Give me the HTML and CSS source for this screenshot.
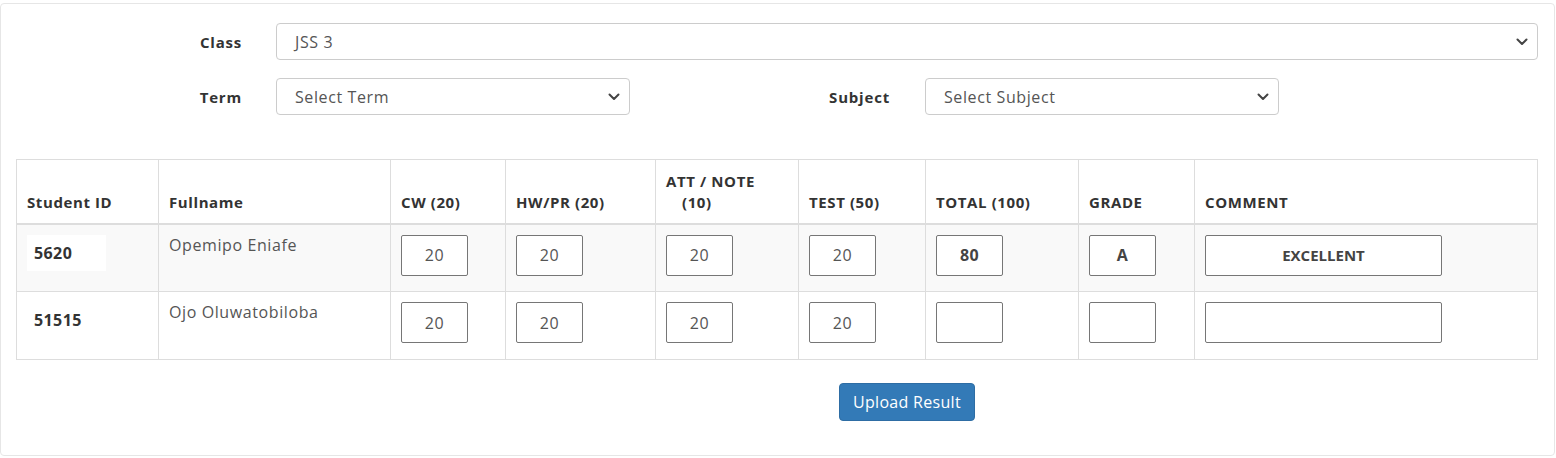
FILE: index.html
```html
<!DOCTYPE html>
<html lang="en">
<head>
<meta charset="utf-8">
<title>Upload Result</title>
<link rel="stylesheet" href="styles.css">
</head>
<body>
<div class="card">
  <div class="form-row">
    <label class="lbl lbl-class">Class</label>
    <div class="select sel-class"><span>JSS 3</span><svg class="chev" viewBox="0 0 12 8" width="12" height="8"><polyline points="1.5,1.5 6,6 10.5,1.5" /></svg></div>
  </div>
  <div class="form-row row-two">
    <label class="lbl lbl-term">Term</label>
    <div class="select sel-half"><span>Select Term</span><svg class="chev" viewBox="0 0 12 8" width="12" height="8"><polyline points="1.5,1.5 6,6 10.5,1.5" /></svg></div>
    <label class="lbl lbl-subject">Subject</label>
    <div class="select sel-half"><span>Select Subject</span><svg class="chev" viewBox="0 0 12 8" width="12" height="8"><polyline points="1.5,1.5 6,6 10.5,1.5" /></svg></div>
  </div>

  <table class="results">
    <colgroup>
      <col class="c-id"><col class="c-name"><col class="c-cw"><col class="c-hw"><col class="c-att"><col class="c-test"><col class="c-total"><col class="c-grade"><col class="c-comment">
    </colgroup>
    <thead>
      <tr>
        <th>Student ID</th>
        <th>Fullname</th>
        <th>CW (20)</th>
        <th>HW/PR (20)</th>
        <th>ATT / NOTE<br><span class="indent">(10)</span></th>
        <th>TEST (50)</th>
        <th>TOTAL (100)</th>
        <th>GRADE</th>
        <th>COMMENT</th>
      </tr>
    </thead>
    <tbody>
      <tr class="odd">
        <td><div class="sid">5620</div></td>
        <td class="name">Opemipo Eniafe</td>
        <td><div class="box">20</div></td>
        <td><div class="box">20</div></td>
        <td><div class="box">20</div></td>
        <td><div class="box">20</div></td>
        <td><div class="box bold">80</div></td>
        <td><div class="box bold">A</div></td>
        <td><div class="box wide bold">EXCELLENT</div></td>
      </tr>
      <tr>
        <td><div class="sid plain">51515</div></td>
        <td class="name">Ojo Oluwatobiloba</td>
        <td><div class="box">20</div></td>
        <td><div class="box">20</div></td>
        <td><div class="box">20</div></td>
        <td><div class="box">20</div></td>
        <td><div class="box"></div></td>
        <td><div class="box"></div></td>
        <td><div class="box wide"></div></td>
      </tr>
    </tbody>
  </table>

  <div class="actions">
    <button class="btn">Upload Result</button>
  </div>
</div>
</body>
</html>
```

FILE: styles.css
```css
* { box-sizing: border-box; }

html, body {
  margin: 0;
  padding: 0;
  background: #ffffff;
}

body {
  font-family: "Open Sans", "Noto Sans", "DejaVu Sans", sans-serif;
  font-size: 16px;
  letter-spacing: 0.6px;
  color: #555;
}

.card {
  margin: 3px 1px 0 0;
  height: 453px;
  border: 1px solid #e6e6e6;
  border-radius: 4px;
  padding: 19px 16px 0 15px;
  background: #fff;
}

.form-row {
  display: flex;
  align-items: center;
}

.row-two {
  margin-top: 18px;
}

.lbl {
  font-weight: 700;
  font-size: 15px;
  letter-spacing: 0.8px;
  color: #333;
  text-align: right;
}

.lbl-class, .lbl-term {
  width: 226px;
  margin-right: 34px;
}

.lbl-subject {
  width: 260px;
  margin-right: 35px;
}

.select {
  height: 37px;
  border: 1px solid #ccc;
  border-radius: 4px;
  display: flex;
  align-items: center;
  justify-content: space-between;
  padding: 0 9px 0 18px;
  color: #555;
  font-size: 16px;
  background: #fff;
}

.sel-class { width: 1262px; }
.sel-half { width: 354px; }

.chev polyline {
  fill: none;
  stroke: #444;
  stroke-width: 2;
  stroke-linecap: round;
  stroke-linejoin: round;
}

.results {
  margin-top: 44px;
  width: 1521px;
  table-layout: fixed;
  border-collapse: collapse;
  border: 1px solid #ddd;
}

.c-id { width: 142px; }
.c-name { width: 232px; }
.c-cw { width: 115px; }
.c-hw { width: 150px; }
.c-att { width: 143px; }
.c-test { width: 127px; }
.c-total { width: 153px; }
.c-grade { width: 116px; }
.c-comment { width: 343px; }

.results th {
  text-align: left;
  vertical-align: bottom;
  font-weight: 700;
  font-size: 15px;
  letter-spacing: 0.6px;
  color: #333;
  padding: 0 10px 10px 10px;
  height: 64px;
  line-height: 21px;
  border: 1px solid #ddd;
  border-bottom: 2px solid #ddd;
}

.indent { padding-left: 16px; }

.results td {
  vertical-align: top;
  padding: 10px;
  height: 68px;
  border: 1px solid #ddd;
}

.results tr.odd td { background: #f9f9f9; }

.sid {
  width: 79px;
  height: 36px;
  background: #fff;
  padding-left: 7px;
  font-weight: 700;
  font-size: 16px;
  letter-spacing: 0.4px;
  color: #333;
  display: flex;
  align-items: center;
}

.sid.plain { background: transparent; }

.name {
  line-height: 20px;
  color: #555;
}

.box {
  width: 67px;
  height: 41px;
  border: 1px solid #767676;
  border-radius: 2px;
  background: #fff;
  display: flex;
  align-items: center;
  justify-content: center;
  font-size: 16px;
  color: #555;
}

.box.wide { width: 237px; }

.box.bold {
  font-weight: 700;
  font-size: 16px;
  letter-spacing: 0.3px;
  color: #444;
}

.box.wide.bold {
  font-size: 15px;
  letter-spacing: 0;
}

.actions {
  margin-top: 23px;
  padding-left: 823px;
}

.btn {
  width: 136px;
  height: 38px;
  background: #337ab7;
  border: 1px solid #2e6da4;
  border-radius: 4px;
  color: #fff;
  font-family: inherit;
  font-size: 16px;
  letter-spacing: 0.3px;
  padding: 0;
}
```
